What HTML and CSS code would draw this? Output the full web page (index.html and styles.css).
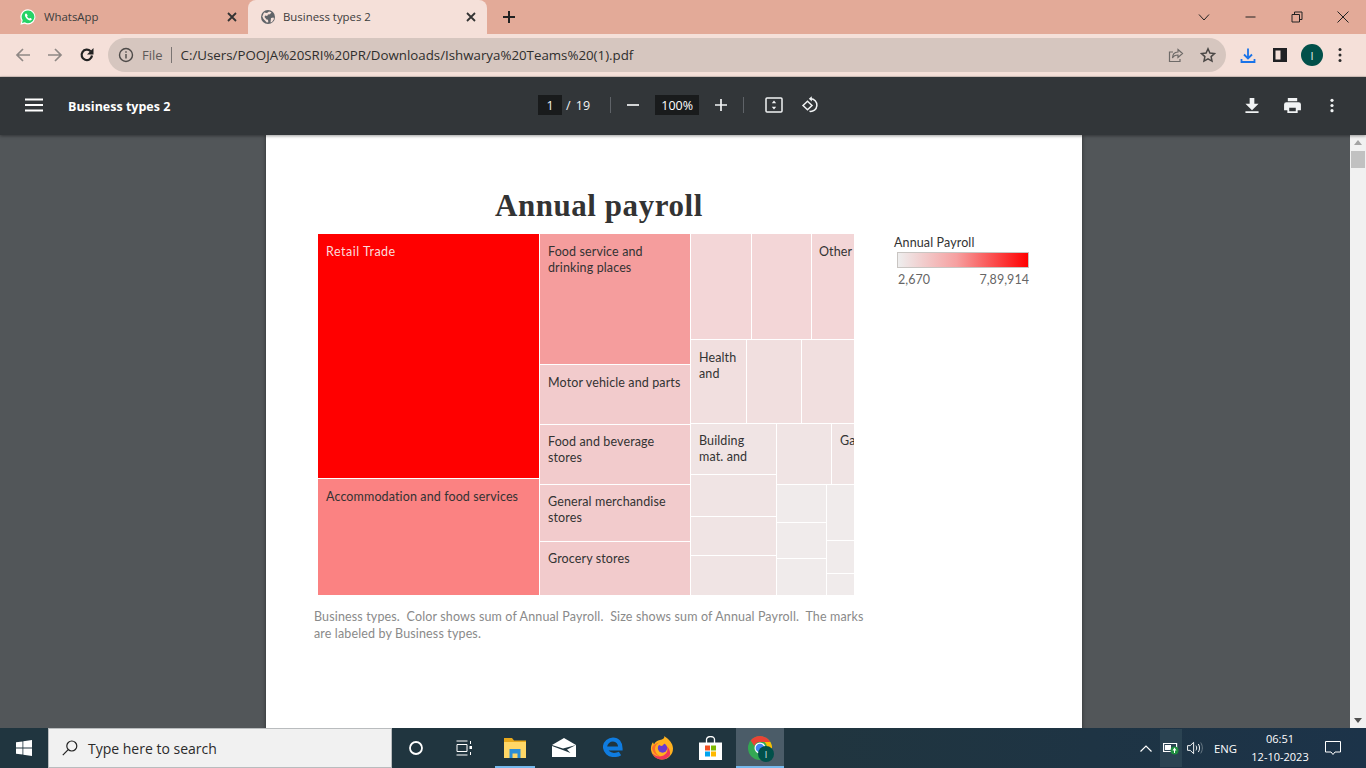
FILE: index.html
```html
<!DOCTYPE html>
<html>
<head>
  <title>Business types 2</title>
  <meta charset="UTF-8">
  <link rel="stylesheet" href="styles.css">
</head>
<body>
  <div class="tabstrip">
    <div class="tab">
      <svg class="tab-icon" viewBox="0 0 16 16"><path fill="#fff" d="M8 .2a7.600 7.600 0 0 0-6.500 11.500L.4 15.800l4.200-1.100A7.600 7.600 0 1 0 8 .2z"/><path fill="#25d366" d="M8 1.500a6.300 6.300 0 0 0-5.300 9.700l-.7 2.700 2.800-.7A6.300 6.300 0 1 0 8 1.500z"/><path fill="#fff" d="M6 4.500c-.4 0-1.100.5-1.100 1.600 0 2.200 2.700 5.200 5.200 5.400 1 0 1.700-.7 1.700-1.400 0-.5-1.300-1.200-1.600-1.200-.4 0-.6.700-1 .7-.6 0-2-1.400-2.100-2 0-.4.600-.6.600-1C7.700 6.300 6.800 4.500 6 4.500z"/></svg>
      <span class="tab-title">WhatsApp</span>
      <svg class="tab-close" viewBox="0 0 10 10"><path d="M1 1l8 8M9 1l-8 8"/></svg>
    </div>
    <div class="tab tab-active">
      <svg class="tab-icon" viewBox="0 0 16 16"><circle cx="8" cy="8" r="7" fill="#5f6368"/><path fill="#f5e0d9" d="M4 3.500l3 .5 2-1.500 2.500.8-1.500 2-2 .2-.8 1.500-2-.5-.7 1.500 2 2.500 1.500.2.300 2.500-1.500.3L3.500 10 2.300 7.500zM11 9l2.500-.5.500 1.500-2 3-1.500.5z"/></svg>
      <span class="tab-title">Business types 2</span>
      <svg class="tab-close" viewBox="0 0 10 10"><path d="M1 1l8 8M9 1l-8 8"/></svg>
    </div>
    <svg class="new-tab" viewBox="0 0 12 12"><path d="M6 0v12M0 6h12"/></svg>
    <div class="window-controls">
      <svg class="win-btn win-chevron" viewBox="0 0 12 12"><path d="M1 3.500l5 5.500 5-5.500"/></svg>
      <svg class="win-btn win-min" viewBox="0 0 12 12"><path d="M.5 6h10"/></svg>
      <svg class="win-btn win-max" viewBox="0 0 12 12"><path d="M1 3.500h7.500V11H1zM3.500 3.500V1H11v7.500H8.500"/></svg>
      <svg class="win-btn win-x" viewBox="0 0 12 12"><path d="M.5.5l11 11M11.500.5l-11 11"/></svg>
    </div>
  </div>

  <div class="toolbar">
    <svg class="nav-icon nav-dim" viewBox="0 0 16 16"><path d="M15 8H2M8 2L2 8l6 6"/></svg>
    <svg class="nav-icon nav-dim" viewBox="0 0 16 16"><path d="M1 8h13M8 2l6 6-6 6"/></svg>
    <svg class="nav-icon nav-reload" viewBox="0 0 16 16"><path class="reload-arc" d="M13 8.500A5.200 5.200 0 1 1 11.600 4.300"/><path class="reload-tip" d="M14.500 1V7.500H8z"/></svg>
    <div class="omnibox">
      <svg class="omni-info" viewBox="0 0 16 16"><circle cx="8" cy="8" r="6.500"/><path d="M8 7v4.500M8 4.200v1.600"/></svg>
      <span class="omni-file">File</span>
      <span class="omni-sep"></span>
      <span class="omni-url">C:/Users/POOJA%20SRI%20PR/Downloads/Ishwarya%20Teams%20(1).pdf</span>
      <svg class="omni-share" viewBox="0 0 16 16"><path d="M10 2.500l4.500 4-4.500 4V8C7 8 5.500 9 4.500 11 4.500 7.500 6.500 5.200 10 5zM12 12v2.500H1.500V5H5"/></svg>
      <svg class="omni-star" viewBox="0 0 16 16"><path d="M8 1.800l1.900 4.200 4.600.5-3.400 3.100.9 4.500L8 11.800l-4 2.300.9-4.500-3.400-3.100 4.600-.5z"/></svg>
    </div>
    <svg class="tool-download" viewBox="0 0 16 16"><path d="M8 1v9.500M4 7l4 4 4-4M1.500 11.500v3h13v-3"/></svg>
    <svg class="tool-panel" viewBox="0 0 14 14"><path fill-rule="evenodd" d="M0 0h14v14H0zM2.500 2.500v9h5v-9z"/></svg>
    <div class="avatar">I</div>
    <svg class="tool-menu" viewBox="0 0 4 16"><circle cx="2" cy="2.500" r="1.500"/><circle cx="2" cy="8" r="1.500"/><circle cx="2" cy="13.500" r="1.500"/></svg>
  </div>

  <div class="pdf-bar">
    <div class="pdf-left">
      <svg class="pdf-hamburger" viewBox="0 0 18 14"><path d="M0 1.500h18M0 7h18M0 12.500h18"/></svg>
      <span class="pdf-title">Business types 2</span>
    </div>
    <div class="pdf-center">
      <span class="pdf-page">1</span>
      <span class="pdf-total">/ 19</span>
      <span class="pdf-sep"></span>
      <svg class="pdf-zoom" viewBox="0 0 12 12"><path d="M0 6h12"/></svg>
      <span class="pdf-percent">100%</span>
      <svg class="pdf-zoom" viewBox="0 0 12 12"><path d="M0 6h12M6 0v12"/></svg>
      <span class="pdf-sep pdf-sep-b"></span>
      <svg class="pdf-fit" viewBox="0 0 18 18"><rect x="1" y="2" width="16" height="14" rx="1"/><path class="fit-arrows" d="M9 4.500l2.200 2.700H6.800zM9 13.500l2.200-2.700H6.800z"/></svg>
      <svg class="pdf-rotate" viewBox="0 0 18 18"><path d="M9.500 2.800a6.300 6.300 0 1 1-1 12.500"/><path d="M6.500 5.300L2 9.500l4.500 4.300L11 9.500z"/><path class="rotate-tip" d="M10.800.2v5.200L7.800 2.800z"/></svg>
    </div>
    <div class="pdf-right">
      <svg class="pdf-action" viewBox="0 0 14 16"><path d="M4.500 0h5v6H14l-7 7-7-7h4.500zM0 14h14v2H0z"/></svg>
      <svg class="pdf-action pdf-print" viewBox="0 0 18 16"><path fill-rule="evenodd" d="M4 0h10v3.500H4zM2.500 4.500h13A2.500 2.500 0 0 1 18 7v6h-3.500v3h-11v-3H0V7a2.500 2.500 0 0 1 2.500-2.500zM5.500 10.500V14h7v-3.500z"/></svg>
      <svg class="pdf-action pdf-more" viewBox="0 0 4 16"><circle cx="2" cy="2.500" r="1.700"/><circle cx="2" cy="8" r="1.700"/><circle cx="2" cy="13.500" r="1.700"/></svg>
    </div>
  </div>

  <div class="viewer">
    <div class="viewer-main">
      <div class="page">
        <div class="report">
          <div class="report-left">
            <h1 class="report-title">Annual payroll</h1>
            <div class="treemap">
              <div class="tm-col" style="flex-grow:221">
                <div class="tile tile-retail" style="flex-grow:244"><span class="label label-low">Retail Trade</span></div>
                <div class="tile tile-accom" style="flex-grow:116"><span class="label label-low">Accommodation and food services</span></div>
              </div>
              <div class="tm-col" style="flex-grow:150">
                <div class="tile tile-foodserv" style="flex-grow:130"><span class="label label-low">Food service and<br>drinking places</span></div>
                <div class="tile tile-mid" style="flex-grow:58"><span class="label label-low">Motor vehicle and parts</span></div>
                <div class="tile tile-mid" style="flex-grow:59"><span class="label">Food and beverage<br>stores</span></div>
                <div class="tile tile-mid" style="flex-grow:56"><span class="label">General merchandise<br>stores</span></div>
                <div class="tile tile-mid" style="flex-grow:53"><span class="label">Grocery stores</span></div>
              </div>
              <div class="tm-col" style="flex-grow:163">
                <div class="tm-row" style="flex-grow:105">
                  <div class="tile tile-a" style="flex-grow:60"></div>
                  <div class="tile tile-a" style="flex-grow:59"></div>
                  <div class="tile tile-a" style="flex-grow:42"><span class="label label-low label-tight">Other</span></div>
                </div>
                <div class="tm-row" style="flex-grow:83">
                  <div class="tile tile-b" style="flex-grow:55"><span class="label label-low">Health<br>and</span></div>
                  <div class="tile tile-b" style="flex-grow:54"></div>
                  <div class="tile tile-b" style="flex-grow:52"></div>
                </div>
                <div class="tm-row" style="flex-grow:171">
                  <div class="tm-col" style="flex-grow:85">
                    <div class="tile tile-c" style="flex-grow:50"><span class="label">Building<br>mat. and</span></div>
                    <div class="tile tile-c" style="flex-grow:41"></div>
                    <div class="tile tile-c" style="flex-grow:38"></div>
                    <div class="tile tile-c" style="flex-grow:39"></div>
                  </div>
                  <div class="tm-col" style="flex-grow:77">
                    <div class="tm-row" style="flex-grow:60">
                      <div class="tile tile-c" style="flex-grow:54"></div>
                      <div class="tile tile-c" style="flex-grow:22"><span class="label">Ga</span></div>
                    </div>
                    <div class="tm-row" style="flex-grow:110">
                      <div class="tm-col" style="flex-grow:49">
                        <div class="tile tile-d" style="flex-grow:37"></div>
                        <div class="tile tile-d" style="flex-grow:35"></div>
                        <div class="tile tile-d" style="flex-grow:36"></div>
                      </div>
                      <div class="tm-col" style="flex-grow:27">
                        <div class="tile tile-d" style="flex-grow:55"></div>
                        <div class="tile tile-d" style="flex-grow:32"></div>
                        <div class="tile tile-d" style="flex-grow:21"></div>
                      </div>
                    </div>
                  </div>
                </div>
              </div>
            </div>
            <p class="caption">Business types.&nbsp; Color shows sum of Annual Payroll.&nbsp; Size shows sum of Annual Payroll.&nbsp; The marks are labeled by Business types.</p>
          </div>
          <div class="legend">
            <div class="legend-title">Annual Payroll</div>
            <div class="legend-bar"></div>
            <div class="legend-range"><span>2,670</span><span>7,89,914</span></div>
          </div>
        </div>
      </div>
    </div>
    <div class="scrollbar">
      <span class="scroll-up"></span>
      <span class="scroll-thumb"></span>
      <span class="scroll-down"></span>
    </div>
  </div>

  <div class="taskbar">
    <div class="start">
      <svg class="start-logo" viewBox="0 0 16 16"><path fill="#fff" d="M0 2.300l6.500-.9v6.200H0zM7.300 1.300L16 0v7.600H7.300zM0 8.400h6.500v6.200L0 13.700zM7.300 8.400H16V16l-8.700-1.300z"/></svg>
    </div>
    <div class="search">
      <svg class="search-icon" viewBox="0 0 16 16"><circle cx="9.800" cy="6" r="5"/><path d="M6.200 9.600L.8 15.200"/></svg>
      <span class="search-text">Type here to search</span>
    </div>
    <div class="task-item task-system">
      <svg class="cortana-svg" viewBox="0 0 16 16"><circle class="cortana" cx="8" cy="8" r="6"/></svg>
    </div>
    <div class="task-item task-system">
      <svg class="taskview" viewBox="0 0 18 16"><path d="M1.500 1h11M1.500 15h11M2 4.500h10v7H2zM15.500 1v3M15.500 12v3"/><rect class="taskview-dot" x="14.500" y="6" width="2.500" height="3"/></svg>
    </div>
    <div class="task-item task-running">
      <svg class="icon-folder" viewBox="0 0 22 20"><path fill="#e8a91c" d="M0 0h8l2 2.500h12V7H0z"/><path fill="#ffd766" d="M0 4h22v16H0z"/><path fill="#2c8ed6" d="M5.500 11h11v9h-3v-4.500h-5V20h-3z"/></svg>
    </div>
    <div class="task-item">
      <svg class="icon-mail" viewBox="0 0 24 19"><path fill="#fff" d="M0 7L12 0l12 7v12H0z"/><path fill="#21363f" d="M0 7l11 3.500L24 7 15 11.500l3.500 3.500L10 11.800 0 8z"/></svg>
    </div>
    <div class="task-item">
      <svg class="icon-edge" viewBox="0 0 20 20"><path fill="none" stroke="#0f7ce0" stroke-width="4.200" d="M4 11.500h13.500C17.500 6 14.500 2.500 10 2.500 6 2.500 2.500 5.500 2 9.500 2 14.500 6 18 11 18c2.500 0 4.500-.5 6-1.500"/></svg>
    </div>
    <div class="task-item">
      <svg class="icon-firefox" viewBox="0 0 24 24"><path fill="#ffb11f" d="M12 23.500A11 11 0 0 1 1.500 9c.4-1.200 1-2.200 1.500-2.700L4 8.500C5 6 7.500 4.500 10 4c3.500-.7 5-2.500 4-4 5 3 9 7.500 9 12.500a11 11 0 0 1-11 11z"/><path fill="#f0345a" d="M12 23.500a11 11 0 0 1-10-7c2.500 3.500 6.500 4.500 10 3.500 4.500-1.300 6.500-5 5-9.500 3.500 3.500 3.500 7 2.500 9.500a11 11 0 0 1-7.500 3.500z"/><path fill="#ff6b2c" d="M2 12c1 6 6 9 10 8.500-4-.5-7-3.500-7-8 0-3 2-5 5-6-3 .5-7 2-8 5.500z"/><circle cx="12.500" cy="12" r="4.700" fill="#6a3ad0"/><path fill="#ffb11f" d="M8 7.500c2-1.500 5-1.500 7-.5l-3 3c-2 0-3-1-4-2.500z"/></svg>
    </div>
    <div class="task-item">
      <svg class="icon-store" viewBox="0 0 23 24"><path fill="none" stroke="#fff" stroke-width="1.300" d="M7.500 7V3.500a4 3 0 0 1 8 0V7"/><path fill="#fff" d="M0 6.500h23V24H0z"/><path fill="#f25022" d="M6 9.500h5v5H6z"/><path fill="#7fba00" d="M12 9.500h5v5h-5z"/><path fill="#00a4ef" d="M6 15.500h5v5H6z"/><path fill="#ffb900" d="M12 15.500h5v5h-5z"/></svg>
    </div>
    <div class="task-item task-active">
      <svg class="icon-chrome" viewBox="0 0 24 24"><circle cx="12" cy="12" r="12" fill="#34a853"/><path fill="#ea4335" d="M12 0a12 12 0 0 1 10.400 6H12a6 6 0 0 0-5.700 4L2.600 4.500A12 12 0 0 1 12 0z"/><path fill="#fbbc05" d="M22.400 6A12 12 0 0 1 12 24l5.200-9a6 6 0 0 0-.7-9z"/><circle cx="12" cy="12" r="5.500" fill="#fff"/><circle cx="12" cy="12" r="4.300" fill="#4285f4"/></svg>
      <span class="chrome-badge">I</span>
    </div>
    <div class="tray">
      <svg class="tray-chevron" viewBox="0 0 12 7"><path d="M.5 6.500L6 1l5.500 5.500"/></svg>
      <div class="tray-battery">
        <svg class="battery-svg" viewBox="0 0 16 14"><path fill="none" stroke="#fff" stroke-width="1.200" d="M.6 2.500h13v8H.6z"/><path fill="#fff" d="M2 4h6v5H2z"/><circle cx="11.500" cy="9.500" r="4" fill="#1e8f3e"/><path fill="#fff" d="M11.500 6.500l2 3-1.500 0V12h-1V9.500h-1.500z"/></svg>
      </div>
      <svg class="tray-volume" viewBox="0 0 18 14"><path d="M.6 4.500h2.800L7 1v12L3.400 9.500H.6zM9.500 4.500c1 1.500 1 3.500 0 5M12 2.800c1.700 2.500 1.700 6 0 8.500"/><path class="volume-off" d="M14.500 1.200c2.300 3.500 2.300 8 0 11.500"/></svg>
      <span class="tray-lang">ENG</span>
      <div class="tray-clock"><span>06:51</span><span>12-10-2023</span></div>
      <svg class="tray-notify" viewBox="0 0 16 15"><path d="M.5.500h15v10.500H10L8 13.500 6 11H.5z"/></svg>
    </div>
  </div>
</body>
</html>
```

FILE: styles.css
```css
* {
  margin: 0;
  padding: 0;
  box-sizing: border-box;
}

html, body {
  height: 100%;
}

body {
  width: 1366px;
  height: 768px;
  display: flex;
  flex-direction: column;
  overflow: hidden;
  font-family: "Open Sans", "Noto Sans", sans-serif;
  background: #525659;
}

/* tab strip */

.tabstrip {
  height: 34px;
  flex: none;
  display: flex;
  align-items: flex-end;
  padding-left: 8px;
  background: #e3aa98;
}

.tab {
  width: 240px;
  height: 34px;
  display: flex;
  align-items: center;
  padding: 0 11px 1px 12px;
  font-size: 11.4px;
  color: #3c3c3c;
}

.tab-active {
  width: 239px;
  border-radius: 8px 8px 0 0;
  background: #f5e0d9;
}

.tab-icon {
  width: 16px;
  height: 16px;
  margin-right: 8px;
}

.tab-active .tab-icon {
  margin-right: 7px;
}

.tab-title {
  flex: 1;
}

.tab-close {
  width: 10px;
  height: 10px;
  fill: none;
  stroke: #333;
  stroke-width: 1.8;
}

.new-tab {
  width: 12px;
  height: 12px;
  margin: 0 0 11px 16px;
  fill: none;
  stroke: #222;
  stroke-width: 2;
}

.window-controls {
  margin-left: auto;
  height: 34px;
  display: flex;
  align-items: center;
  padding-right: 17px;
}

.win-btn {
  width: 12px;
  height: 12px;
  fill: none;
  stroke: #222;
  stroke-width: 1;
}

.win-chevron {
  margin-right: 35px;
}

.win-min {
  margin-right: 34px;
}

.win-max {
  margin-right: 34px;
}

/* address bar */

.toolbar {
  height: 43px;
  flex: none;
  display: flex;
  align-items: center;
  padding: 0 0 0 15px;
  background: #f5e0d9;
  border-bottom: 1px solid #d9c8c1;
}

.nav-icon {
  width: 16px;
  height: 16px;
  margin-right: 16px;
  fill: none;
  stroke-width: 1.7;
}

.nav-dim {
  stroke: #8f8885;
}

.nav-reload {
  margin-right: 13px;
}

.reload-arc {
  stroke: #222;
  stroke-width: 2.2;
}

.reload-tip {
  fill: #222;
  stroke: none;
}

.omnibox {
  width: 1118px;
  height: 34px;
  display: flex;
  align-items: center;
  padding: 0 10px 0 10px;
  border-radius: 17px;
  background: #d6c6bf;
  font-size: 13px;
}

.omni-info {
  width: 16px;
  height: 16px;
  margin-right: 8px;
  fill: none;
  stroke: #4d4a48;
  stroke-width: 1.4;
}

.omni-file {
  color: #5e5a58;
}

.omni-sep {
  width: 1px;
  height: 16px;
  margin: 0 9px 0 8px;
  background: #7a7472;
}

.omni-url {
  flex: 1;
  color: #2f2e2d;
  font-size: 13.3px;
}

.omni-share {
  width: 16px;
  height: 16px;
  margin-right: 16px;
  fill: none;
  stroke: #6e6a68;
  stroke-width: 1.2;
}

.omni-star {
  width: 16px;
  height: 16px;
  fill: none;
  stroke: #4a4745;
  stroke-width: 1.5;
}

.tool-download {
  width: 16px;
  height: 17px;
  margin-left: 14px;
  fill: none;
  stroke: #1a73e8;
  stroke-width: 1.8;
}

.tool-panel {
  width: 14px;
  height: 14px;
  margin-left: 17px;
  fill: #202124;
}

.avatar {
  width: 22px;
  height: 22px;
  margin-left: 14px;
  display: flex;
  align-items: center;
  justify-content: center;
  border-radius: 50%;
  background: #01504a;
  color: #e6f0ee;
  font-size: 11px;
}

.tool-menu {
  width: 4px;
  height: 16px;
  margin-left: 15px;
  fill: #2a2a2a;
}

/* pdf viewer toolbar */

.pdf-bar {
  height: 58px;
  flex: none;
  position: relative;
  z-index: 2;
  display: flex;
  align-items: center;
  padding-bottom: 2px;
  background: #323639;
  box-shadow: 0 1px 3px rgba(0, 0, 0, 0.4);
}

.pdf-left {
  width: 538px;
  display: flex;
  align-items: center;
  padding-left: 25px;
}

.pdf-hamburger {
  width: 18px;
  height: 14px;
  margin-right: 25px;
  fill: none;
  stroke: #fff;
  stroke-width: 2;
}

.pdf-title {
  margin-top: 2px;
  color: #fff;
  font-size: 12.5px;
  font-weight: 700;
}

.pdf-center {
  display: flex;
  align-items: center;
  color: #f1f3f4;
  font-size: 12.5px;
}

.pdf-page {
  width: 24px;
  height: 20px;
  display: flex;
  align-items: center;
  justify-content: center;
  background: #191b1c;
}

.pdf-total {
  margin-left: 4px;
  word-spacing: 2px;
}

.pdf-sep {
  width: 1px;
  height: 16px;
  margin: 0 16px 0 20px;
  background: #5f6368;
}

.pdf-sep-b {
  margin: 0 21px 0 16px;
}

.pdf-zoom {
  width: 12px;
  height: 12px;
  fill: none;
  stroke: #f1f3f4;
  stroke-width: 1.7;
}

.pdf-percent {
  width: 44px;
  height: 20px;
  margin: 0 16px;
  display: flex;
  align-items: center;
  justify-content: center;
  background: #191b1c;
  color: #fff;
}

.pdf-fit {
  width: 18px;
  height: 18px;
  fill: none;
  stroke: #f1f3f4;
  stroke-width: 1.5;
}

.fit-arrows {
  fill: #f1f3f4;
  stroke: none;
}

.pdf-rotate {
  width: 18px;
  height: 18px;
  margin-left: 18px;
  fill: none;
  stroke: #f1f3f4;
  stroke-width: 1.5;
}

.rotate-tip {
  fill: #f1f3f4;
  stroke: none;
}

.pdf-right {
  margin-left: auto;
  display: flex;
  align-items: center;
  padding-right: 32px;
}

.pdf-action {
  width: 14px;
  height: 15px;
  fill: #f1f3f4;
}

.pdf-print {
  width: 17px;
  margin-left: 25px;
}

.pdf-more {
  width: 4px;
  height: 15px;
  margin-left: 29px;
}

/* document area */

.viewer {
  flex: 1;
  min-height: 0;
  display: flex;
}

.viewer-main {
  flex: 1;
  display: flex;
  justify-content: center;
  overflow: hidden;
  background: #525659;
  padding-right: 2px;
}

.page {
  width: 816px;
  height: 700px;
  flex: none;
  background: #fff;
  box-shadow: 0 0 4px rgba(0, 0, 0, 0.45);
}

.report {
  display: flex;
  padding: 53px 0 0 48px;
}

.report-left {
  width: 552px;
}

.report-title {
  height: 46px;
  padding-left: 181px;
  color: #333;
  font-family: "Liberation Serif", serif;
  font-size: 31px;
  font-weight: 700;
  line-height: 36px;
  letter-spacing: 0.55px;
}

.treemap {
  width: 536px;
  height: 361px;
  margin-left: 4px;
  display: flex;
  gap: 1px;
  background: #fff;
  overflow: hidden;
}

.tm-col,
.tm-row {
  flex-basis: 0;
  min-width: 0;
  min-height: 0;
  display: flex;
  gap: 1px;
}

.tm-col {
  flex-direction: column;
}

.tile {
  flex-basis: 0;
  min-width: 0;
  min-height: 0;
  overflow: hidden;
  color: #333;
  font-family: Lato, sans-serif;
  font-size: 12.5px;
  line-height: 16px;
  letter-spacing: 0.12px;
  white-space: nowrap;
}

.label {
  display: block;
  padding: 9px 0 0 8px;
}

.label-low {
  padding-top: 10px;
}

.label-tight {
  padding-left: 7px;
}

.tile-retail {
  background: #ff0000;
  color: #fbdcdc;
  letter-spacing: 0.5px;
}

.tile-accom {
  background: #fb8282;
}

.tile-foodserv {
  background: #f59d9d;
}

.tile-mid {
  background: #f2cbcc;
}

.tile-a {
  background: #f3d6d7;
}

.tile-b {
  background: #f1dfdf;
}

.tile-c {
  background: #f0e4e4;
}

.tile-d {
  background: #f0ebeb;
}

.caption {
  width: 560px;
  margin-top: 13px;
  color: #8a8a8a;
  font-family: Lato, sans-serif;
  font-size: 12.5px;
  line-height: 17px;
  letter-spacing: 0.14px;
}

.legend {
  margin: 47px 0 0 28px;
  width: 140px;
  font-family: Lato, sans-serif;
  font-size: 12.5px;
}

.legend-title {
  height: 16px;
  line-height: 16px;
  color: #333;
  letter-spacing: 0.12px;
}

.legend-bar {
  width: 132px;
  height: 16px;
  margin: 1px 0 0 3px;
  border: 1px solid #c9c5c2;
  background: linear-gradient(90deg, #eeeeee 0%, #f6a0a0 45%, #ff0000 100%);
}

.legend-range {
  width: 131px;
  margin: 4px 0 0 4px;
  display: flex;
  justify-content: space-between;
  color: #666;
  letter-spacing: 0.05px;
}

.scrollbar {
  width: 16px;
  flex: none;
  display: flex;
  flex-direction: column;
  align-items: center;
  padding-top: 5px;
  background: #f1f1f1;
}

.scroll-up {
  width: 0;
  height: 0;
  border: 4px solid transparent;
  border-top: 0;
  border-bottom: 5px solid #a3a3a3;
}

.scroll-thumb {
  width: 14px;
  height: 17px;
  margin-top: 6px;
  background: #c1c1c1;
}

.scroll-down {
  width: 0;
  height: 0;
  margin-top: auto;
  margin-bottom: 5px;
  border: 4px solid transparent;
  border-bottom: 0;
  border-top: 5px solid #505050;
}

/* windows taskbar */

.taskbar {
  height: 40px;
  flex: none;
  position: relative;
  z-index: 3;
  display: flex;
  align-items: center;
  background: linear-gradient(90deg, #20353f 0%, #20353f 60%, #1c3349 100%);
}

.start {
  width: 48px;
  display: flex;
  justify-content: center;
}

.start-logo {
  width: 16px;
  height: 16px;
}

.search {
  width: 344px;
  height: 40px;
  display: flex;
  align-items: center;
  padding-left: 13px;
  border: 1px solid #b9bcbe;
  background: #f1f1f1;
  color: #2b2b2b;
  font-size: 14px;
}

.search-icon {
  width: 16px;
  height: 16px;
  margin-right: 10px;
  fill: none;
  stroke: #222;
  stroke-width: 1.2;
}

.task-item {
  width: 49px;
  height: 40px;
  flex: none;
  display: flex;
  align-items: center;
  justify-content: center;
  position: relative;
}

.task-system {
  width: 48px;
}

.task-running {
  margin-left: 2px;
}

.task-running::after {
  content: "";
  position: absolute;
  left: 5px;
  right: 4px;
  bottom: 0;
  height: 2px;
  background: #76b9ed;
}

.task-active {
  width: 48px;
  margin-left: 1px;
  background: #4b5c68;
  box-shadow: inset 0 -2px 0 #76b9ed;
}

.cortana-svg {
  width: 16px;
  height: 16px;
}

.cortana {
  fill: none;
  stroke: #fff;
  stroke-width: 1.8;
}

.taskview {
  width: 18px;
  height: 16px;
  fill: none;
  stroke: #fff;
  stroke-width: 1;
}

.taskview-dot {
  fill: #fff;
  stroke: none;
}

.icon-folder {
  width: 22px;
  height: 20px;
  margin-bottom: 1px;
}

.icon-mail {
  width: 24px;
  height: 19px;
  margin-bottom: 1px;
}

.icon-edge {
  width: 20px;
  height: 20px;
  margin-bottom: 2px;
}

.icon-firefox {
  width: 24px;
  height: 24px;
}

.icon-store {
  width: 23px;
  height: 24px;
}

.icon-chrome {
  width: 24px;
  height: 24px;
}

.chrome-badge {
  position: absolute;
  left: 22px;
  top: 18px;
  width: 16px;
  height: 16px;
  display: flex;
  align-items: center;
  justify-content: center;
  border-radius: 50%;
  background: #01504a;
  color: #dfeeea;
  font-size: 9px;
}

.tray {
  margin-left: auto;
  height: 40px;
  display: flex;
  align-items: center;
  color: #fff;
  font-size: 11.3px;
}

.tray-chevron {
  width: 12px;
  height: 7px;
  fill: none;
  stroke: #fff;
  stroke-width: 1.2;
}

.tray-battery {
  width: 22px;
  height: 38px;
  margin-left: 8px;
  display: flex;
  align-items: center;
  justify-content: center;
  background: #2b4352;
}

.battery-svg {
  width: 16px;
  height: 14px;
}

.tray-volume {
  width: 17px;
  height: 14px;
  margin-left: 5px;
  fill: none;
  stroke: #fff;
  stroke-width: 1;
}

.volume-off {
  stroke: #6d7d88;
}

.tray-lang {
  margin-left: 10px;
}

.tray-clock {
  width: 64px;
  margin-left: 11px;
  display: flex;
  flex-direction: column;
  align-items: center;
  font-size: 11px;
  line-height: 18px;
}

.tray-notify {
  width: 16px;
  height: 15px;
  margin: 0 25px 0 13px;
  fill: none;
  stroke: #fff;
  stroke-width: 1;
}
```
